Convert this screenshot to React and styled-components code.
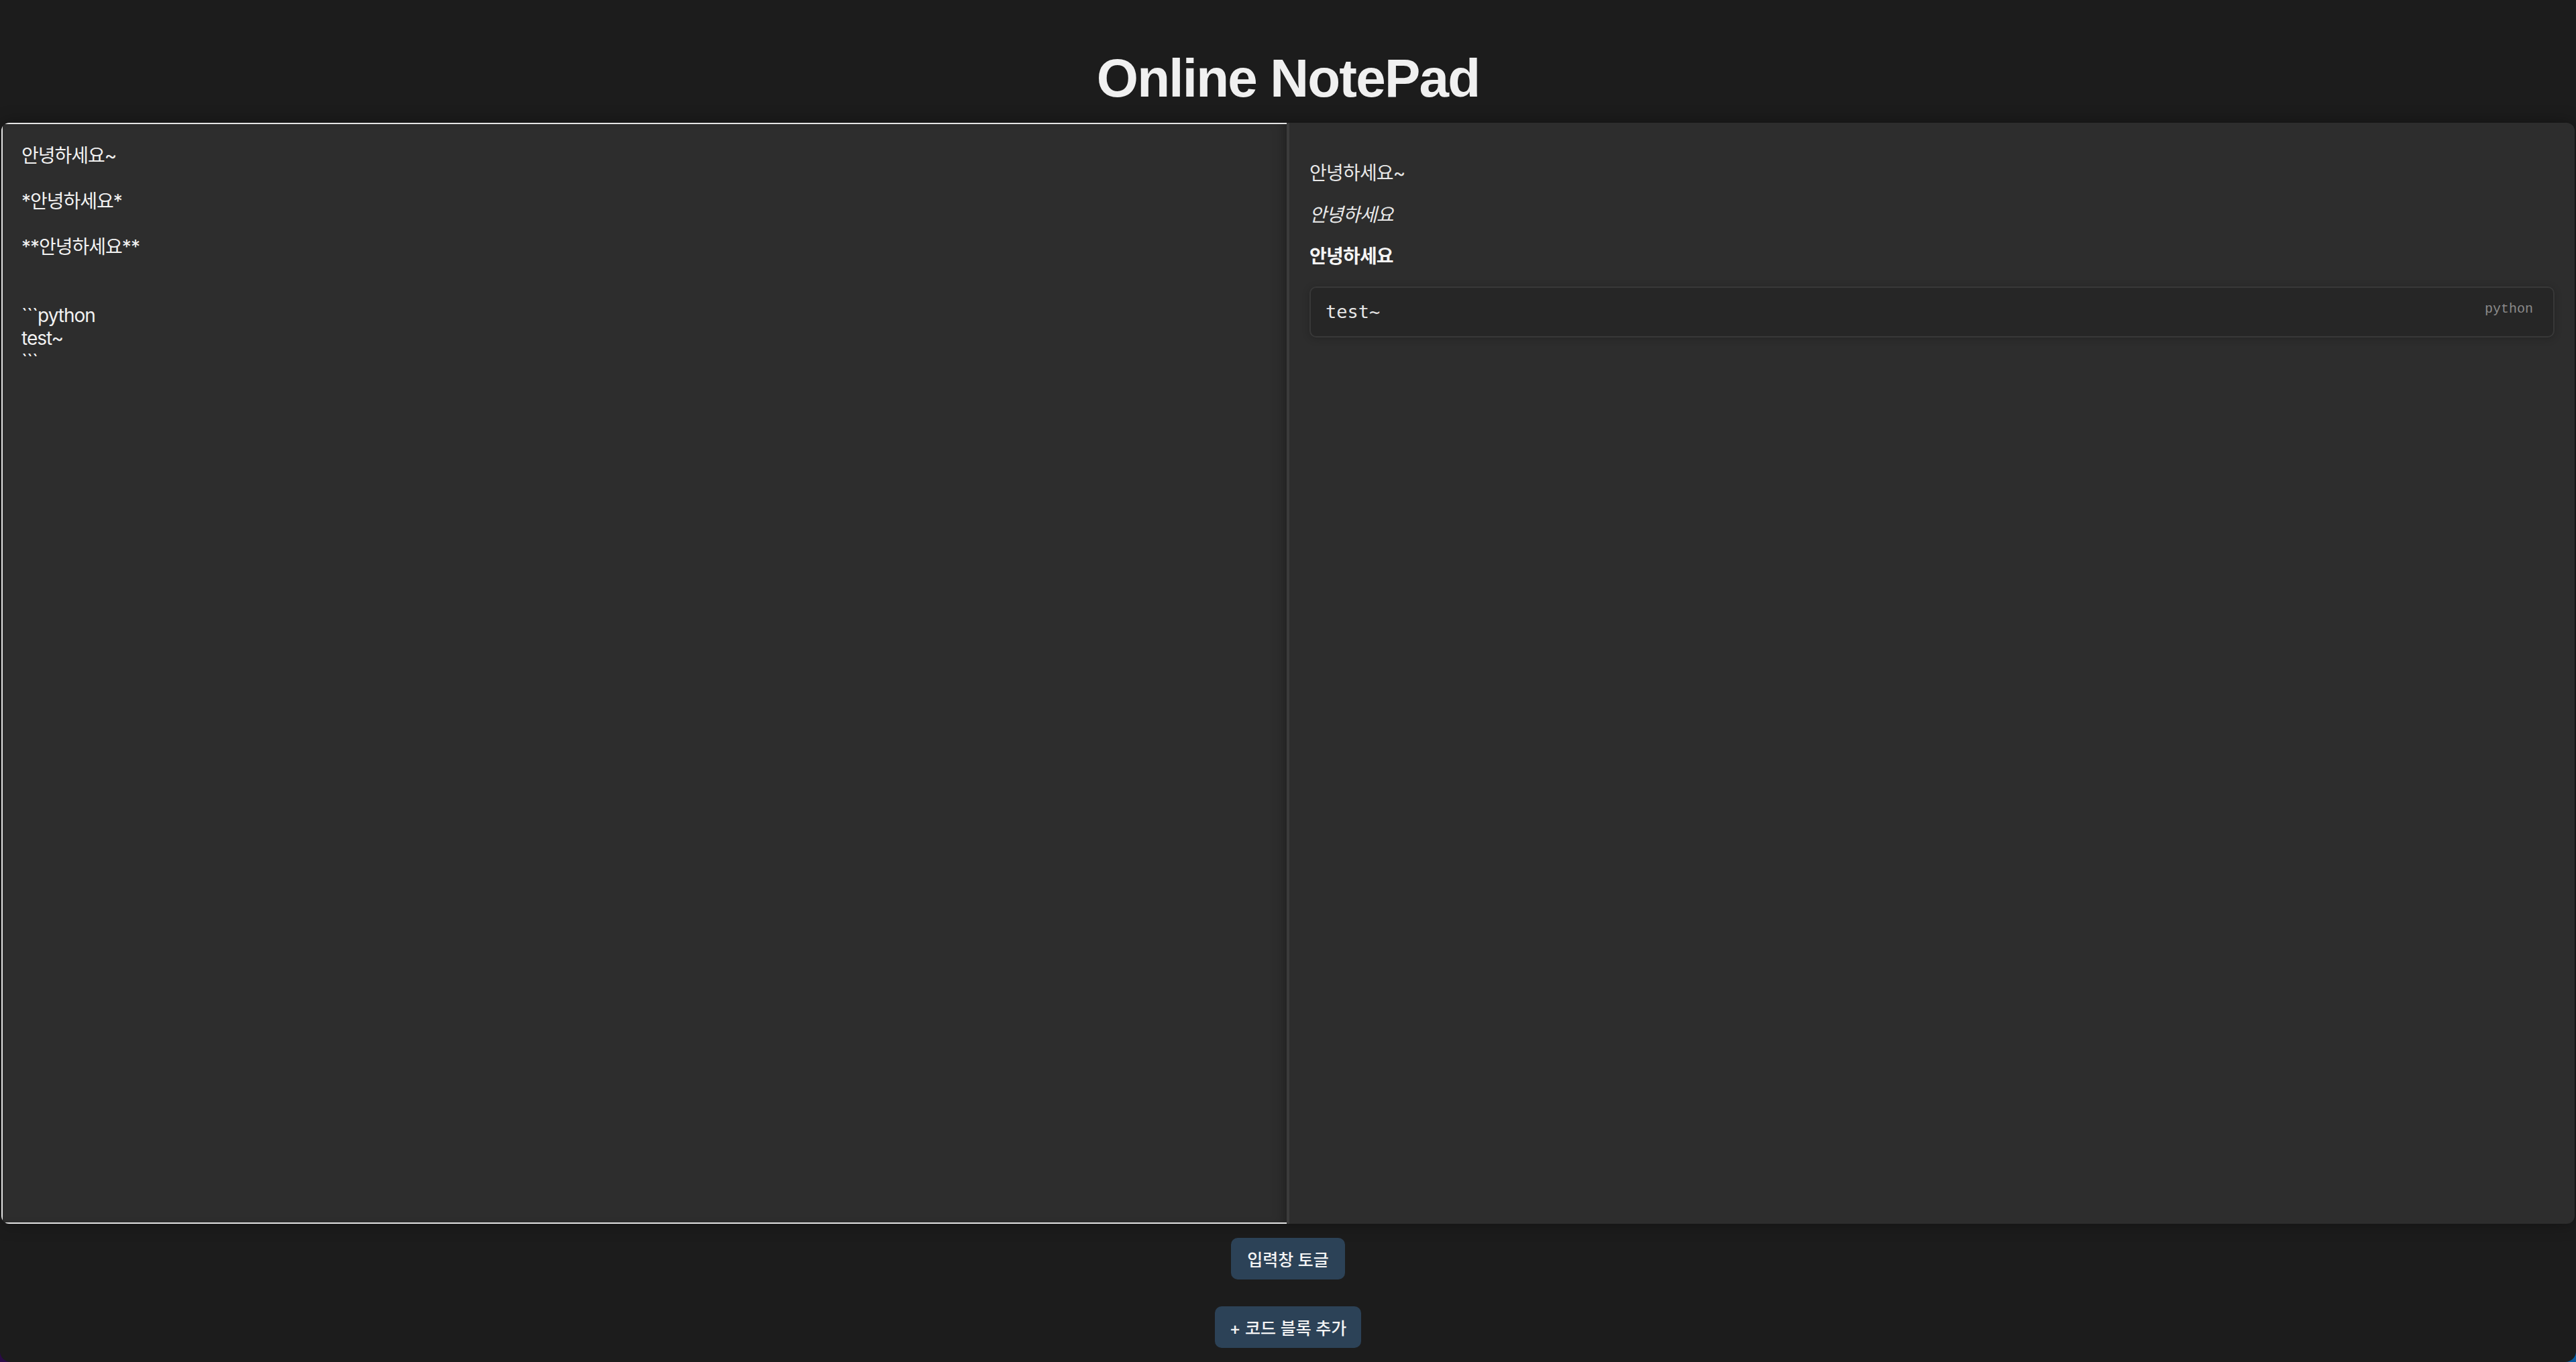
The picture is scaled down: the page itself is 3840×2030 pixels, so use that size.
import React, { useState } from 'react';
import styled, { createGlobalStyle } from 'styled-components';

const GlobalStyle = createGlobalStyle`
  html {
    background: linear-gradient(90deg, #2a0b46 0%, #1b2f6a 60%, #0b5a9c 100%);
  }
  body {
    margin: 0;
    font-family: Inter, "Noto Sans CJK KR", sans-serif;
    color: #f0f0f0;
  }
  * { box-sizing: border-box; }
`;

const sans = `Inter, "Noto Sans CJK KR", sans-serif`;

const Page = styled.div`
  display: flex;
  flex-direction: column;
  height: 100vh;
  background: #1c1c1c;
  border-radius: 0 0 16px 16px;
  overflow: hidden;
`;

const Header = styled.header`
  padding: 71px 0 20px;
  text-align: center;
`;

const Title = styled.h1`
  margin: 0;
  font-family: "Liberation Sans", Arial, sans-serif;
  font-size: 80px;
  line-height: 92px;
  font-weight: 700;
  letter-spacing: -1.8px;
  color: #f0f0f0;
`;

const Workspace = styled.main`
  flex: 1;
  display: grid;
  grid-template-columns: 1fr 4px 1fr;
  margin: 0 2px;
  background: #2d2d2d;
  border-radius: 12px;
  overflow: hidden;
  box-shadow: 0 0 24px rgba(0, 0, 0, 0.35);
`;

const Editor = styled.textarea`
  display: block;
  width: 100%;
  height: 100%;
  margin: 0;
  padding: 30px 30px 30px 28px;
  resize: none;
  outline: none;
  background: #2d2d2d;
  color: #f2f2f2;
  border: 2px solid #e4e4e4;
  border-right: none;
  font-family: ${sans};
  font-size: 28px;
  line-height: 34px;
  letter-spacing: -1px;
  box-shadow: inset -14px 0 18px -12px rgba(0, 0, 0, 0.35);
`;

const Divider = styled.div`
  background: #3b3b3b;
`;

const Preview = styled.section`
  padding: 30px;
  overflow: auto;
  font-family: ${sans};
  font-size: 28px;
  line-height: 34px;
  letter-spacing: -0.8px;
  color: #e8e8e8;
`;

const Para = styled.p`
  margin: 28px 0;
  strong { color: #f4f4f4; font-weight: 700; }
  em { font-style: italic; }
`;

const CodeBlock = styled.pre`
  position: relative;
  margin: 28px 0;
  padding: 19px 22px;
  background: #262626;
  border: 2px solid #383838;
  border-radius: 10px;
  box-shadow: 0 2px 12px rgba(0, 0, 0, 0.2);
  font-family: "DejaVu Sans Mono", monospace;
  font-size: 27px;
  line-height: 34px;
  letter-spacing: 0;
  color: #e6e6e6;
  white-space: pre-wrap;
`;

const Lang = styled.span`
  position: absolute;
  top: 20px;
  right: 30px;
  font-family: "Liberation Mono", monospace;
  font-size: 20px;
  line-height: 24px;
  color: #8a8a8a;
`;

const Actions = styled.footer`
  display: flex;
  flex-direction: column;
  align-items: center;
  gap: 40px;
  padding: 21px 0;
`;

const Button = styled.button`
  height: 62px;
  padding: 0 ${p => p.$wide ? 22 : 24}px;
  border: none;
  border-radius: 10px;
  background: #2c4257;
  color: #f4f4f4;
  font-family: ${sans};
  font-size: 25px;
  font-weight: 500;
  cursor: pointer;
`;

const initialText = '안녕하세요~\n\n*안녕하세요*\n\n**안녕하세요**\n\n\n```python\ntest~\n```';

// tiny markdown: paragraphs, *em*, **strong**, fenced code
const renderInline = (line, key) => {
  const parts = line.split(/(\*\*[^*]+\*\*|\*[^*]+\*)/g).filter(Boolean);
  return parts.map((part, i) => {
    if (part.startsWith('**') && part.endsWith('**')) return <strong key={key + i}>{part.slice(2, -2)}</strong>;
    if (part.startsWith('*') && part.endsWith('*')) return <em key={key + i}>{part.slice(1, -1)}</em>;
    return part;
  });
};

const parse = (text) => {
  const blocks = [];
  const chunks = text.split(/```/);
  chunks.forEach((chunk, i) => {
    if (i % 2 === 1) {
      const nl = chunk.indexOf('\n');
      const lang = nl === -1 ? '' : chunk.slice(0, nl).trim();
      const code = (nl === -1 ? chunk : chunk.slice(nl + 1)).replace(/\n$/, '');
      blocks.push({ type: 'code', lang, code });
    } else {
      chunk.split(/\n\s*\n/).map(s => s.trim()).filter(Boolean)
        .forEach(p => blocks.push({ type: 'p', text: p }));
    }
  });
  return blocks;
};

export default function App() {
  const [text, setText] = useState(initialText);
  const [showEditor, setShowEditor] = useState(true);
  const blocks = parse(text);

  return (
    <>
      <GlobalStyle />
      <Page>
        <Header>
          <Title>Online NotePad</Title>
        </Header>
        <Workspace>
          {showEditor && <Editor value={text} onChange={e => setText(e.target.value)} spellCheck={false} />}
          {showEditor && <Divider />}
          <Preview>
            {blocks.map((b, i) => b.type === 'code' ? (
              <CodeBlock key={i}>
                {b.lang && <Lang>{b.lang}</Lang>}
                {b.code}
              </CodeBlock>
            ) : (
              <Para key={i}>{renderInline(b.text, i + '-')}</Para>
            ))}
          </Preview>
        </Workspace>
        <Actions>
          <Button onClick={() => setShowEditor(v => !v)}>입력창 토글</Button>
          <Button $wide onClick={() => setText(t => t + '\n\n```python\n\n```')}>+ 코드 블록 추가</Button>
        </Actions>
      </Page>
    </>
  );
}
